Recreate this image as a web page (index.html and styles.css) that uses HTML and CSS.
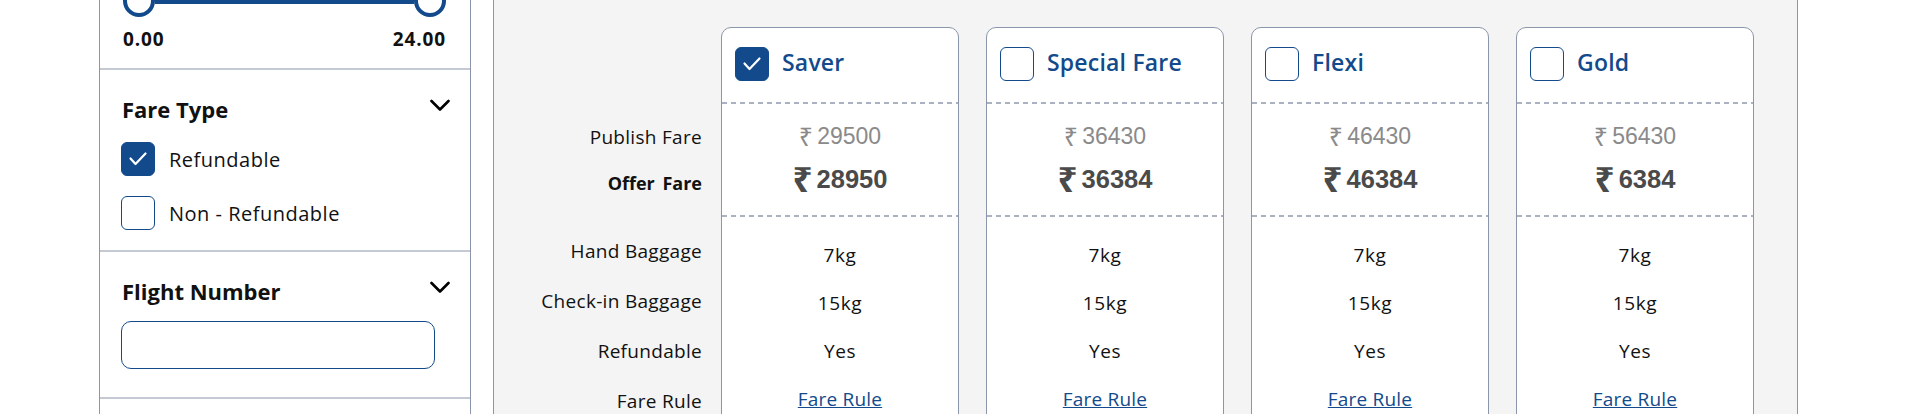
FILE: index.html
```html
<!DOCTYPE html>
<html lang="en">
<head>
<meta charset="utf-8">
<title>Fare options</title>
<link rel="stylesheet" href="styles.css">
</head>
<body>
<div class="page">
  <aside class="sidebar">
    <section class="filter filter-time">
      <div class="slider">
        <span class="thumb"></span>
        <span class="track"></span>
        <span class="thumb"></span>
      </div>
      <div class="range-values"><span>0.00</span><span>24.00</span></div>
    </section>
    <section class="filter filter-fare">
      <div class="filter-head">
        <h3>Fare Type</h3>
        <svg class="chevron" width="20" height="13" viewBox="0 0 20 13"><polyline points="1.5,2 10,10.5 18.5,2" fill="none" stroke="#000" stroke-width="2.6" stroke-linecap="round" stroke-linejoin="round"/></svg>
      </div>
      <label class="check-row">
        <span class="box checked"><svg width="34" height="34" viewBox="0 0 34 34"><polyline points="9.5,16.5 14.5,22 24.5,11.5" fill="none" stroke="#fff" stroke-width="2.2" stroke-linecap="round" stroke-linejoin="round"/></svg></span>
        <span>Refundable</span>
      </label>
      <label class="check-row second">
        <span class="box"></span>
        <span>Non - Refundable</span>
      </label>
    </section>
    <section class="filter filter-flight">
      <div class="filter-head">
        <h3>Flight Number</h3>
        <svg class="chevron" width="20" height="13" viewBox="0 0 20 13"><polyline points="1.5,2 10,10.5 18.5,2" fill="none" stroke="#000" stroke-width="2.6" stroke-linecap="round" stroke-linejoin="round"/></svg>
      </div>
      <input class="text-input" type="text">
    </section>
    <section class="filter filter-next"></section>
  </aside>

  <main class="fares">
    <div class="labels">
      <div class="label label-publish">Publish Fare</div>
      <div class="label label-offer">Offer Fare</div>
      <div class="label-rows">
        <div class="label-row">Hand Baggage</div>
        <div class="label-row">Check-in Baggage</div>
        <div class="label-row">Refundable</div>
        <div class="label-row">Fare Rule</div>
      </div>
    </div>

    <div class="cards">
      <div class="card">
        <div class="card-head">
          <span class="box checked"><svg width="34" height="34" viewBox="0 0 34 34"><polyline points="9.5,16.5 14.5,22 24.5,11.5" fill="none" stroke="#fff" stroke-width="2.2" stroke-linecap="round" stroke-linejoin="round"/></svg></span>
          <span class="card-title">Saver</span>
        </div>
        <div class="dash"></div>
        <div class="card-prices">
          <div class="price publish"><span class="rupee">₹</span>29500</div>
          <div class="price offer"><span class="rupee">₹</span>28950</div>
        </div>
        <div class="dash"></div>
        <div class="card-rows">
          <div class="card-row">7kg</div>
          <div class="card-row">15kg</div>
          <div class="card-row">Yes</div>
          <div class="card-row"><a href="#" class="link">Fare Rule</a></div>
        </div>
      </div>

      <div class="card">
        <div class="card-head">
          <span class="box"></span>
          <span class="card-title">Special Fare</span>
        </div>
        <div class="dash"></div>
        <div class="card-prices">
          <div class="price publish"><span class="rupee">₹</span>36430</div>
          <div class="price offer"><span class="rupee">₹</span>36384</div>
        </div>
        <div class="dash"></div>
        <div class="card-rows">
          <div class="card-row">7kg</div>
          <div class="card-row">15kg</div>
          <div class="card-row">Yes</div>
          <div class="card-row"><a href="#" class="link">Fare Rule</a></div>
        </div>
      </div>

      <div class="card">
        <div class="card-head">
          <span class="box"></span>
          <span class="card-title">Flexi</span>
        </div>
        <div class="dash"></div>
        <div class="card-prices">
          <div class="price publish"><span class="rupee">₹</span>46430</div>
          <div class="price offer"><span class="rupee">₹</span>46384</div>
        </div>
        <div class="dash"></div>
        <div class="card-rows">
          <div class="card-row">7kg</div>
          <div class="card-row">15kg</div>
          <div class="card-row">Yes</div>
          <div class="card-row"><a href="#" class="link">Fare Rule</a></div>
        </div>
      </div>

      <div class="card">
        <div class="card-head">
          <span class="box"></span>
          <span class="card-title">Gold</span>
        </div>
        <div class="dash"></div>
        <div class="card-prices">
          <div class="price publish"><span class="rupee">₹</span>56430</div>
          <div class="price offer"><span class="rupee">₹</span>6384</div>
        </div>
        <div class="dash"></div>
        <div class="card-rows">
          <div class="card-row">7kg</div>
          <div class="card-row">15kg</div>
          <div class="card-row">Yes</div>
          <div class="card-row"><a href="#" class="link">Fare Rule</a></div>
        </div>
      </div>
    </div>
  </main>
</div>
</body>
</html>
```

FILE: styles.css
```css
* { box-sizing: border-box; }

html, body {
  margin: 0;
  padding: 0;
  background: #fff;
  height: 414px;
  overflow: hidden;
}

body {
  font-family: "Open Sans", "Noto Sans", sans-serif;
  color: #111;
}

.page {
  display: flex;
  align-items: stretch;
  height: 414px;
  padding-left: 99px;
}

/* ---------- sidebar ---------- */
.sidebar {
  width: 372px;
  border-left: 1px solid #8c96aa;
  border-right: 1px solid #8c96aa;
  display: flex;
  flex-direction: column;
  flex-shrink: 0;
}

.filter {
  flex-shrink: 0;
  border-bottom: 2px solid #c4c9d3;
  padding: 25px 20px 0 22px;
}

.filter-time {
  display: flex;
  flex-direction: column;
  height: 70px;
  padding: 0 24px 0 23px;
}

.slider {
  display: flex;
  align-items: center;
  height: 32px;
  margin-top: -15px;
}

.thumb {
  width: 32px;
  height: 32px;
  border: 4px solid #124a8c;
  border-radius: 50%;
  background: #fff;
  flex-shrink: 0;
}

.track {
  flex: 1;
  height: 6px;
  background: #124a8c;
}

.range-values {
  display: flex;
  justify-content: space-between;
  margin-top: 11px;
  font-size: 19px;
  line-height: 22px;
  font-weight: 700;
  letter-spacing: 0.9px;
  color: #111;
}

.filter-head {
  display: flex;
  justify-content: space-between;
  align-items: flex-start;
}

.filter-head h3 {
  margin: 0;
  font-size: 22px;
  line-height: 28px;
  font-weight: 700;
  color: #111;
}

.chevron {
  margin-top: 4px;
  display: block;
}

.check-row {
  display: flex;
  align-items: center;
  gap: 14px;
  margin: 19px 0 0 -1px;
  font-size: 20px;
  font-weight: 500;
  letter-spacing: 0.5px;
  color: #111;
}

.check-row.second {
  margin-top: 20px;
}

.filter-fare {
  height: 182px;
}

.filter-flight {
  height: 147px;
}

.filter-next {
  flex: 1 0 auto;
  padding: 0;
  border-bottom: none;
}

.box {
  width: 34px;
  height: 34px;
  border: 1.5px solid #124a8c;
  border-radius: 6px;
  background: #fff;
  flex-shrink: 0;
  display: block;
}

.box.checked {
  background: #124a8c;
  border-color: #124a8c;
}

.box svg {
  display: block;
  margin: -1.5px;
}

.text-input {
  display: block;
  width: 314px;
  height: 48px;
  margin: 16px 0 0 -1px;
  border: 1.5px solid #124a8c;
  border-radius: 10px;
  background: #fff;
  outline: none;
  font: inherit;
}

/* ---------- fares panel ---------- */
.fares {
  margin-left: 22px;
  width: 1305px;
  flex-shrink: 0;
  background: #f4f4f4;
  border-left: 1px solid #8c96aa;
  border-right: 1px solid #8c96aa;
  display: flex;
  align-items: flex-start;
  padding-top: 27px;
}

.labels {
  width: 208px;
  flex-shrink: 0;
  text-align: right;
  padding-top: 98px;
  font-size: 19px;
  letter-spacing: 0.3px;
  color: #111;
}

.label {
  line-height: 24px;
}

.label-offer {
  margin-top: 22px;
  font-size: 18px;
  font-weight: 700;
  letter-spacing: 0;
  word-spacing: 3px;
}

.label-rows {
  margin-top: 31px;
}

.label-row {
  height: 50px;
  line-height: 50px;
}

.cards {
  display: flex;
  gap: 27px;
  margin-left: 19px;
}

.card {
  width: 238px;
  background: #fff;
  border: 1px solid #8c96aa;
  border-radius: 10px;
  height: 420px;
}

.card-head {
  height: 74px;
  display: flex;
  align-items: center;
  gap: 13px;
  padding: 0 13px 2px;
}

.card-title {
  font-size: 23px;
  line-height: 28px;
  font-weight: 600;
  letter-spacing: 0.2px;
  color: #124a8c;
  margin-bottom: 4px;
}

.dash {
  height: 2px;
  background: repeating-linear-gradient(to right, #aab2c1 0 5px, transparent 5px 9px);
}

.card-prices {
  height: 111px;
  padding-top: 18px;
  text-align: center;
  font-family: "Liberation Sans", Arial, sans-serif;
}

.price.publish {
  font-size: 23px;
  line-height: 28px;
  color: #8a8a8a;
}

.price.offer {
  margin-top: 14px;
  font-size: 25.5px;
  line-height: 30px;
  font-weight: 700;
  color: #4a4a4a;
}

.rupee {
  font-family: "Noto Sans", "DejaVu Sans", sans-serif;
  line-height: 0;
  margin-right: 4px;
  position: relative;
}

.publish .rupee {
  font-size: 25px;
  top: 2px;
}

.offer .rupee {
  font-size: 35px;
  top: 4px;
}

.card-rows {
  padding-top: 14px;
}

.card-row {
  height: 48px;
  line-height: 48px;
  text-align: center;
  font-size: 19px;
  letter-spacing: 0.6px;
  color: #111;
}

.link {
  color: #124a8c;
  text-decoration: underline;
  letter-spacing: 0.2px;
}
```
